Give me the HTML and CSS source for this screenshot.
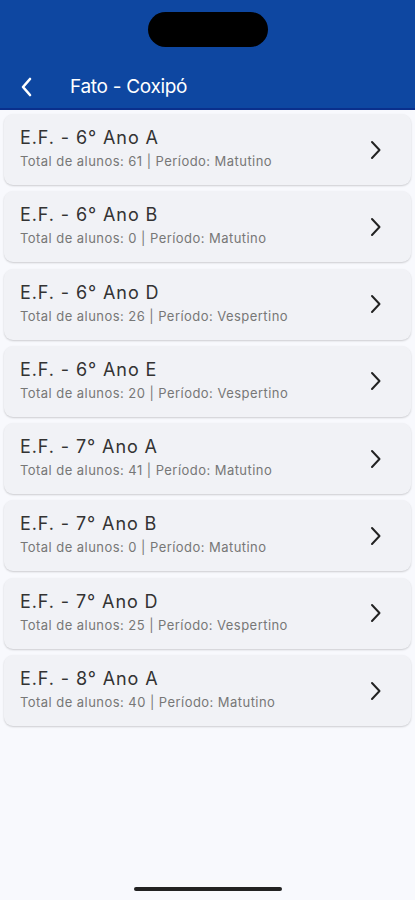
FILE: index.html
```html
<!DOCTYPE html>
<html>
<head>
    <title>Fato - Coxipó</title>
    <link rel="stylesheet" href="styles.css">
</head>
<body>
    <div class="header">
        <div class="notch"></div>
        <div class="toolbar">
            <svg class="back" width="14" height="20" viewBox="0 0 14 20"><path d="M10 2 L3 10 L10 18" fill="none" stroke="#fff" stroke-width="2.6" stroke-linecap="round" stroke-linejoin="round"/></svg>
            <span class="title">Fato - Coxipó</span>
        </div>
    </div>

    <div class="list">
        <div class="card">
            <div class="info">
                <div class="name">E.F. - 6° Ano A</div>
                <div class="meta">Total de alunos: 61 | Período: Matutino</div>
            </div>
            <svg class="chev" width="12" height="20" viewBox="0 0 12 20"><path d="M2 2 L9.5 10 L2 18" fill="none" stroke="#222" stroke-width="2" stroke-linecap="round" stroke-linejoin="round"/></svg>
        </div>
        <div class="card">
            <div class="info">
                <div class="name">E.F. - 6° Ano B</div>
                <div class="meta">Total de alunos: 0 | Período: Matutino</div>
            </div>
            <svg class="chev" width="12" height="20" viewBox="0 0 12 20"><path d="M2 2 L9.5 10 L2 18" fill="none" stroke="#222" stroke-width="2" stroke-linecap="round" stroke-linejoin="round"/></svg>
        </div>
        <div class="card">
            <div class="info">
                <div class="name">E.F. - 6° Ano D</div>
                <div class="meta">Total de alunos: 26 | Período: Vespertino</div>
            </div>
            <svg class="chev" width="12" height="20" viewBox="0 0 12 20"><path d="M2 2 L9.5 10 L2 18" fill="none" stroke="#222" stroke-width="2" stroke-linecap="round" stroke-linejoin="round"/></svg>
        </div>
        <div class="card">
            <div class="info">
                <div class="name">E.F. - 6° Ano E</div>
                <div class="meta">Total de alunos: 20 | Período: Vespertino</div>
            </div>
            <svg class="chev" width="12" height="20" viewBox="0 0 12 20"><path d="M2 2 L9.5 10 L2 18" fill="none" stroke="#222" stroke-width="2" stroke-linecap="round" stroke-linejoin="round"/></svg>
        </div>
        <div class="card">
            <div class="info">
                <div class="name">E.F. - 7° Ano A</div>
                <div class="meta">Total de alunos: 41 | Período: Matutino</div>
            </div>
            <svg class="chev" width="12" height="20" viewBox="0 0 12 20"><path d="M2 2 L9.5 10 L2 18" fill="none" stroke="#222" stroke-width="2" stroke-linecap="round" stroke-linejoin="round"/></svg>
        </div>
        <div class="card">
            <div class="info">
                <div class="name">E.F. - 7° Ano B</div>
                <div class="meta">Total de alunos: 0 | Período: Matutino</div>
            </div>
            <svg class="chev" width="12" height="20" viewBox="0 0 12 20"><path d="M2 2 L9.5 10 L2 18" fill="none" stroke="#222" stroke-width="2" stroke-linecap="round" stroke-linejoin="round"/></svg>
        </div>
        <div class="card">
            <div class="info">
                <div class="name">E.F. - 7° Ano D</div>
                <div class="meta">Total de alunos: 25 | Período: Vespertino</div>
            </div>
            <svg class="chev" width="12" height="20" viewBox="0 0 12 20"><path d="M2 2 L9.5 10 L2 18" fill="none" stroke="#222" stroke-width="2" stroke-linecap="round" stroke-linejoin="round"/></svg>
        </div>
        <div class="card">
            <div class="info">
                <div class="name">E.F. - 8° Ano A</div>
                <div class="meta">Total de alunos: 40 | Período: Matutino</div>
            </div>
            <svg class="chev" width="12" height="20" viewBox="0 0 12 20"><path d="M2 2 L9.5 10 L2 18" fill="none" stroke="#222" stroke-width="2" stroke-linecap="round" stroke-linejoin="round"/></svg>
        </div>
    </div>

    <div class="home-bar"></div>
</body>
</html>
```

FILE: styles.css
```css
body {
    margin: 0;
    height: 900px;
    background: #f8f9fd;
    font-family: Inter, "Noto Sans", sans-serif;
    position: relative;
    overflow: hidden;
}

.header {
    background: #0e47a1;
    border-bottom: 2px solid #0a2f8c;
    height: 108px;
    display: flex;
    flex-direction: column;
    align-items: center;
}
.notch {
    margin-top: 12px;
    width: 120px;
    height: 35px;
    border-radius: 18px;
    background: #000;
}
.toolbar {
    align-self: stretch;
    display: flex;
    align-items: center;
    margin-top: 28px;
    padding-left: 20px;
}
.back { margin-right: 36px; }
.title {
    color: #fff;
    font-size: 19px;
    letter-spacing: -0.3px;
}

/* Liste des turmas */
.list {
    padding: 4px 4px 0;
    display: flex;
    flex-direction: column;
    gap: 6.3px;
}
.card {
    height: 71px;
    background: #f1f2f6;
    border-radius: 9px;
    box-shadow: 0 1px 2px rgba(0, 0, 0, 0.18);
    display: flex;
    align-items: center;
    padding: 0 29px 0 16px;
}
.info { flex: 1; }
.name {
    font-size: 18px;
    color: #333;
    letter-spacing: 0.9px;
    margin-top: -3px;
}
.meta {
    font-size: 13px;
    color: #777;
    letter-spacing: 0.45px;
    margin-top: 5px;
}

.home-bar {
    position: absolute;
    left: 134px;
    bottom: 9px;
    width: 148px;
    height: 4px;
    border-radius: 2px;
    background: #222;
}
```
